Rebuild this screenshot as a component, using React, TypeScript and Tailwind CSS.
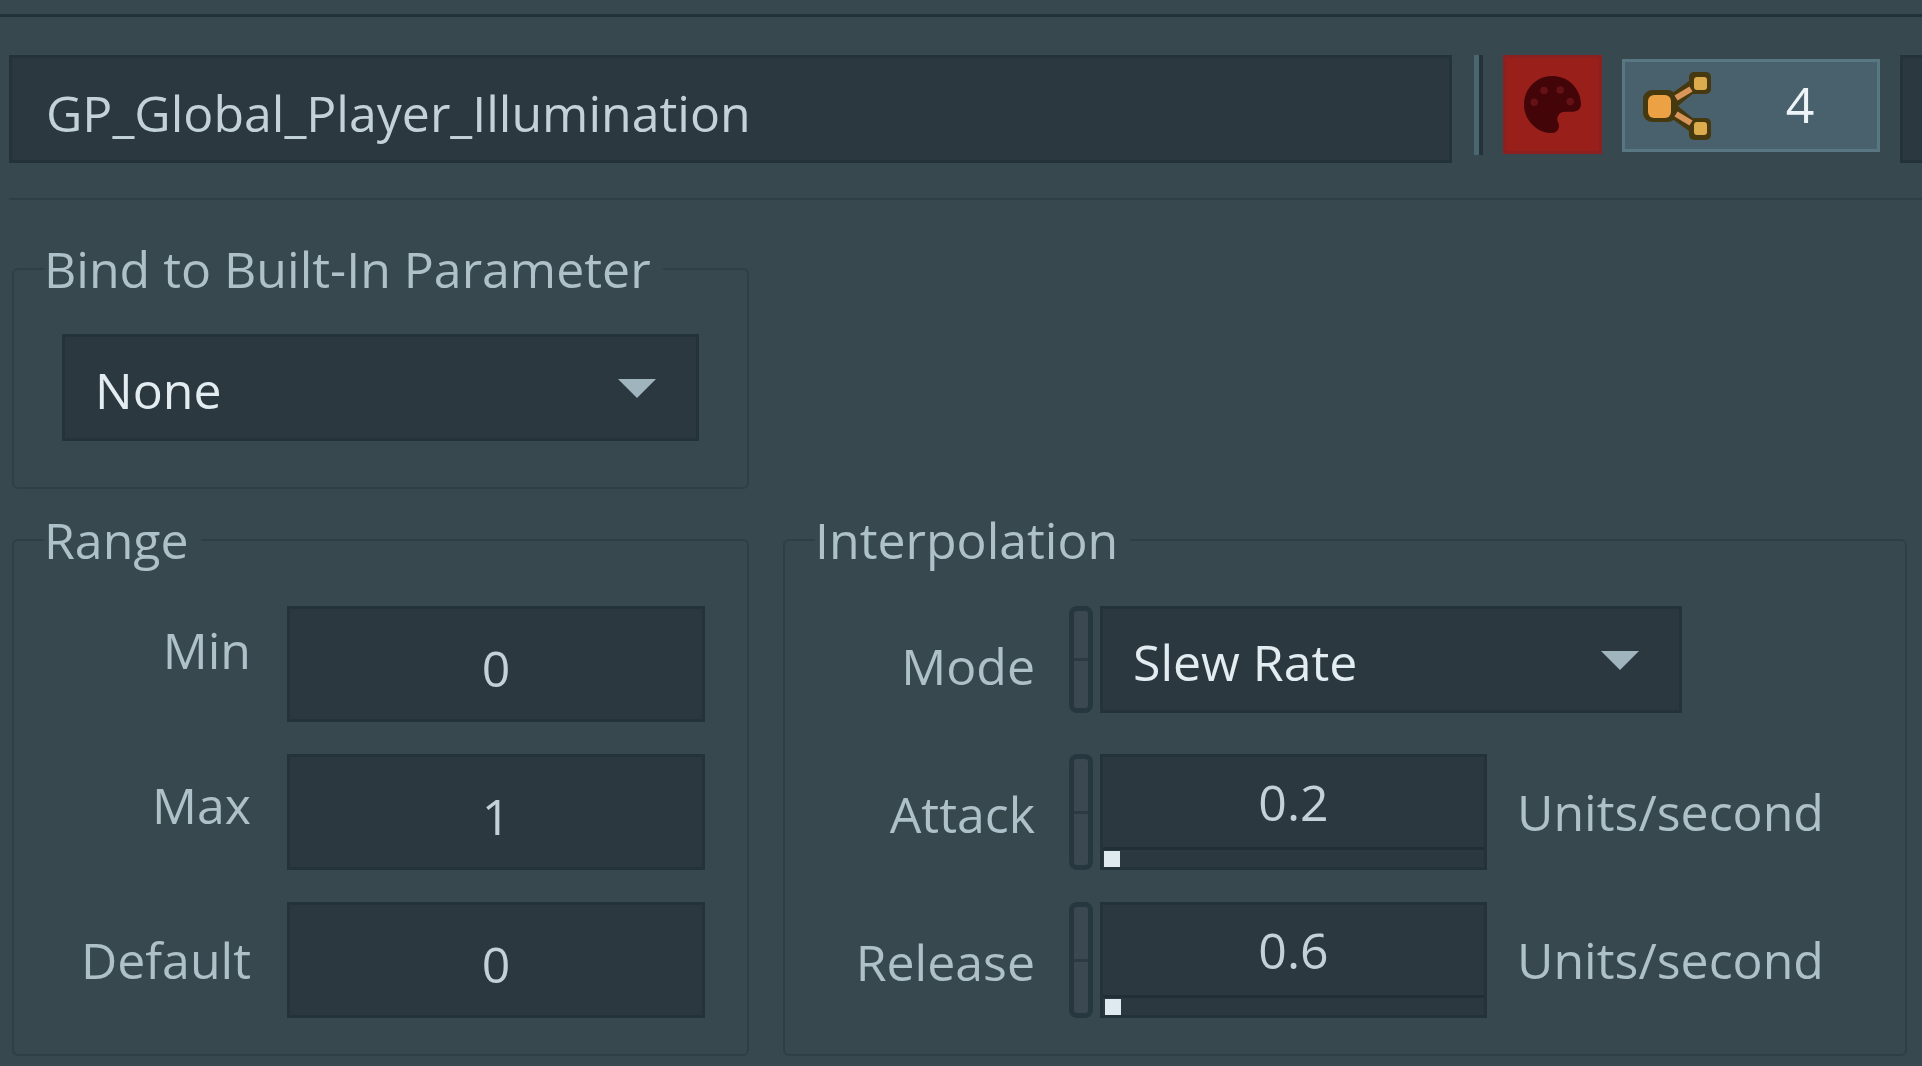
import { useState } from "react";
import type { ReactNode } from "react";

const box = "border-[3px] border-[#24323a] bg-[#2b3840]";

const PaletteIcon = () => (
  <svg viewBox="0 0 512 512" className="size-[57px]" aria-hidden="true">
    <path
      fill="#430508"
      d="M204.3 5C104.9 24.4 24.8 104.3 5.2 203.4c-37 187 131.7 326.4 258.8 306.7 41.2-6.4 61.4-54.6 42.5-91.7-23.1-45.4 9.9-98.4 60.9-98.4h79.7c35.8 0 64.8-29.6 64.9-65.3C511.5 97.1 368.1-26.9 204.3 5z"
    />
    <g fill="#651216">
      <circle cx="92" cy="235" r="34" />
      <circle cx="180" cy="130" r="34" />
      <circle cx="325" cy="125" r="34" />
      <circle cx="415" cy="230" r="34" />
    </g>
  </svg>
);

const RoutingIcon = () => (
  <svg viewBox="0 0 68 68" className="size-[68px]" aria-hidden="true">
    <g fill="#46380f">
      <path d="M28 22 46 9 52 20 35 34 52 48 46 59 28 46z" />
      <rect x="0" y="18" width="34" height="32" rx="9" />
      <rect x="46" y="0" width="22" height="22" rx="5" />
      <rect x="46" y="46" width="22" height="22" rx="5" />
    </g>
    <g stroke="#d9965a" strokeWidth="6">
      <path d="M33 26 48 17" />
      <path d="M33 42 48 51" />
    </g>
    <rect x="5" y="23" width="23" height="23" rx="6" fill="#eda145" />
    <rect x="51" y="5" width="13" height="13" rx="3" fill="#dcab4e" />
    <rect x="51" y="50" width="13" height="13" rx="3" fill="#dcab4e" />
  </svg>
);

const Group = ({ title, children }: { title: string; children: ReactNode }) => (
  <fieldset className="min-w-0 rounded-md border-2 border-[#2f3f46] px-[30px]">
    <legend className="pr-3 leading-[60px]">{title}</legend>
    {children}
  </fieldset>
);

type DropdownProps = {
  id: string;
  label?: string;
  options: string[];
};

const Dropdown = ({ id, label, options }: DropdownProps) => (
  <div className="relative flex-1">
    <select
      id={id}
      aria-label={label}
      className={`${box} h-[107px] w-full appearance-none pl-[30px] pt-1 text-[#e3ecf0] outline-none`}
    >
      {options.map((option) => (
        <option key={option}>{option}</option>
      ))}
    </select>
    <svg
      viewBox="0 0 38 19"
      className="pointer-events-none absolute right-[43px] top-[45px] h-[19px] w-[38px]"
      aria-hidden="true"
    >
      <path fill="#9fb4bc" d="M0 0h38L19 19z" />
    </svg>
  </div>
);

// Small modulation handle shown in front of every automatable value
const Handle = ({ short }: { short?: boolean }) => (
  <span
    className={`${short ? "h-[107px]" : "h-[116px]"} flex w-6 flex-col justify-center rounded-lg border-[5px] border-[#273740] bg-[#3b4851]`}
  >
    <span className="h-[3px] bg-[#2b3a43]" />
  </span>
);

const rangeFields = [
  { id: "min", label: "Min", value: "0" },
  { id: "max", label: "Max", value: "1" },
  { id: "default", label: "Default", value: "0" },
];

const SliderRow = ({ id, label, initial }: { id: string; label: string; initial: string }) => {
  const [value, setValue] = useState(initial);

  return (
    <div className="flex h-[116px] items-center">
      <label htmlFor={id} className="w-[220px] pt-1 text-right">
        {label}
      </label>
      <div className="ml-[34px] flex gap-[7px]">
        <Handle />
        <div className={`${box} flex h-[116px] w-[387px] flex-col`}>
          <input
            id={id}
            value={value}
            onChange={(e) => setValue(e.target.value)}
            className="h-[90px] w-full text-center text-[#c3d2d9] outline-none"
          />
          <input
            type="range"
            aria-label={`${label} slider`}
            min="0"
            max="100"
            step="0.1"
            value={value}
            onChange={(e) => setValue(e.target.value)}
            className="block h-5 w-full appearance-none border-t-[3px] border-[#212e36] bg-transparent outline-none [&::-webkit-slider-thumb]:size-4 [&::-webkit-slider-thumb]:appearance-none [&::-webkit-slider-thumb]:bg-[#dfeaf0]"
          />
        </div>
      </div>
      <span className="ml-[30px]">Units/second</span>
    </div>
  );
};

export default function App() {
  return (
    <main className="min-h-screen overflow-hidden bg-[#37484f] pt-[14px] font-['Open_Sans',sans-serif] text-[50px] leading-[60px] text-[#aec1c8]">
      <header className="border-t-[3px] border-[#22313a] pl-[9px]">
        <div className="flex items-start border-b-2 border-[#303f47] pb-[35px] pt-[38px]">
          <input
            aria-label="Parameter name"
            defaultValue="GP_Global_Player_Illumination"
            className={`${box} h-[108px] min-w-0 flex-1 pl-[34px] pt-2 text-[#c3d2d9] outline-none`}
          />
          <span className="ml-[22px] h-[100px] w-[9px] border-l-[5px] border-r-[4px] border-l-[#4a6670] border-r-[#24323a]" />
          <button
            aria-label="Color"
            className="ml-5 flex size-[99px] items-center justify-center border-[3px] border-[#8c1f20] bg-[#981f1a]"
          >
            <PaletteIcon />
          </button>
          <button className="ml-5 mt-1 flex h-[93px] w-[258px] items-center border-[3px] border-[#587783] bg-[#49616d] pl-[18px] text-[#eef5f8]">
            <RoutingIcon />
            <span className="flex-1 pb-1 pl-3 text-center">4</span>
          </button>
          <span className="ml-5 h-[108px] w-[22px] border-y-[3px] border-l-[3px] border-[#24323a] bg-[#2b3840]" />
        </div>
      </header>

      <div className="grid grid-cols-[737px_minmax(0,1fr)] gap-x-[34px] gap-y-[21px] pl-3 pr-[15px] pt-[39px]">
        <Group title="Bind to Built-In Parameter">
          <div className="px-[18px] pb-[46px] pt-[35px]">
            <Dropdown id="binding" label="Bind to Built-In Parameter" options={["None", "Distance", "Direction"]} />
          </div>
        </Group>

        <div className="col-start-1">
          <Group title="Range">
            <div className="flex gap-9 pb-9 pr-3 pt-9">
              <div className="flex flex-1 flex-col gap-[95px] pt-[14px] text-right">
                {rangeFields.map((field) => (
                  <label key={field.id} htmlFor={field.id}>
                    {field.label}
                  </label>
                ))}
              </div>
              <div className="flex w-[418px] flex-col gap-8">
                {rangeFields.map((field) => (
                  <input
                    key={field.id}
                    id={field.id}
                    defaultValue={field.value}
                    className={`${box} h-[116px] w-full pt-2 text-center text-[#c3d2d9] outline-none`}
                  />
                ))}
              </div>
            </div>
          </Group>
        </div>

        <Group title="Interpolation">
          <div className="flex flex-col gap-8 pb-9 pt-9">
            <div className="flex h-[116px] items-start">
              <label htmlFor="mode" className="w-[220px] self-center pt-1 text-right">
                Mode
              </label>
              <div className="ml-[34px] flex w-[613px] gap-[7px]">
                <Handle short />
                <Dropdown id="mode" options={["Slew Rate", "Filtered Over Time", "None"]} />
              </div>
            </div>
            <SliderRow id="attack" label="Attack" initial="0.2" />
            <SliderRow id="release" label="Release" initial="0.6" />
          </div>
        </Group>
      </div>
    </main>
  );
}
